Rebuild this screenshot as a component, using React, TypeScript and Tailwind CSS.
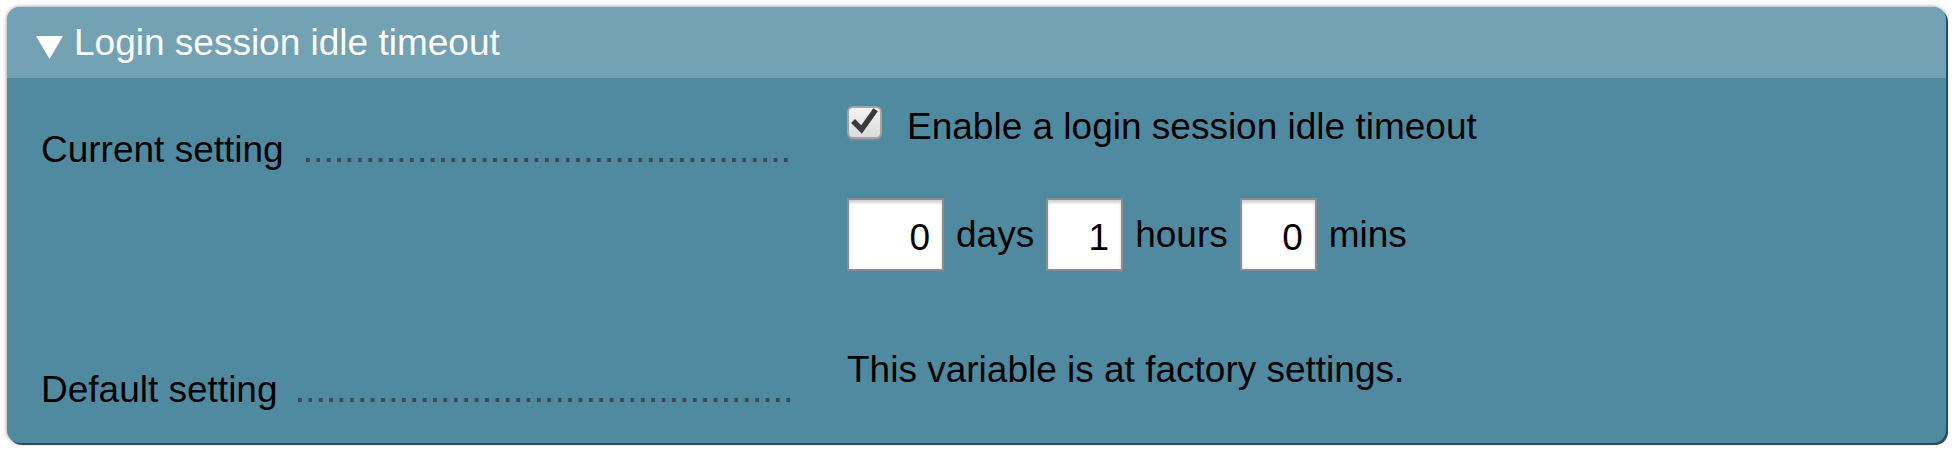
const FONT = "font-['Liberation_Sans',Arial,sans-serif]";

function Dots({ className = "" }: { className?: string }) {
	return (
		<div
			className={`h-[4px] flex-1 bg-[linear-gradient(to_right,#404a50_4px,transparent_4px)] bg-[length:10.4px_4px] bg-repeat-x ${className}`}
		/>
	);
}

function CheckBox() {
	return (
		<div className="relative w-[35px] h-[33px] rounded-[6px] border-2 border-[#a3a3a3] bg-[linear-gradient(#f4f4f4,#dcdcdc)] shadow-[0_2px_0_#6e8f9c]">
			<svg viewBox="0 0 31 29" className="absolute inset-0 w-[31px] h-[29px]">
				<path
					d="M6 15 L12.5 21.5 L25 4"
					fill="none"
					stroke="#3b3b3b"
					strokeWidth="5.5"
					strokeLinecap="square"
				/>
			</svg>
		</div>
	);
}

function NumBox({ value, width }: { value: string; width: string }) {
	return (
		<div
			className={`${width} h-[73px] border-2 border-[#8c8c8c] bg-white shadow-[inset_0_3px_3px_rgba(0,0,0,0.18)] flex items-center justify-end pr-[12px] pt-[6px] text-[37px] text-black`}
		>
			{value}
		</div>
	);
}

export default function App() {
	return (
		<div className={`w-[1957px] h-[453px] bg-white pt-[7px] pl-[7px] ${FONT}`}>
			<div className="w-[1939px] h-[436px] rounded-[13px] overflow-hidden bg-[#4f8aa0] shadow-[2px_2px_0_#274d5e,0_0_4px_rgba(0,0,0,0.45)]">
				{/* HEADER */}
				<div className="h-[71px] bg-[#73a2b4] flex items-center pl-[29px] text-white text-[37px] leading-[42px]">
					<svg viewBox="0 0 27 23" className="w-[27px] h-[23px] mt-[10px] mr-[11px] shrink-0">
						<polygon points="0,0 27,0 13.5,23" fill="#ffffff" />
					</svg>
					<span>Login session idle timeout</span>
				</div>

				{/* BODY */}
				<div className="pt-[28px] text-[37px] leading-[42px] text-black">
					{/* CURRENT SETTING */}
					<div className="flex items-start">
						<div className="w-[783px] pl-[34px] mt-[23px] flex items-end shrink-0">
							<span>Current setting</span>
							<Dots className="ml-[22px] mb-[9px]" />
						</div>
						<div className="ml-[57px] flex flex-col">
							<div className="flex items-start gap-[25px] h-[42px]">
								<CheckBox />
								<span>Enable a login session idle timeout</span>
							</div>
							<div className="mt-[50px] flex items-center gap-[12px]">
								<NumBox value="0" width="w-[97px]" />
								<span>days</span>
								<NumBox value="1" width="w-[77px]" />
								<span>hours</span>
								<NumBox value="0" width="w-[77px]" />
								<span>mins</span>
							</div>
						</div>
					</div>

					{/* DEFAULT SETTING */}
					<div className="flex items-start mt-[78px]">
						<div className="w-[783px] pl-[34px] mt-[20px] flex items-end shrink-0">
							<span>Default setting</span>
							<Dots className="ml-[20px] mb-[9px]" />
						</div>
						<div className="ml-[57px]">This variable is at factory settings.</div>
					</div>
				</div>
			</div>
		</div>
	);
}
